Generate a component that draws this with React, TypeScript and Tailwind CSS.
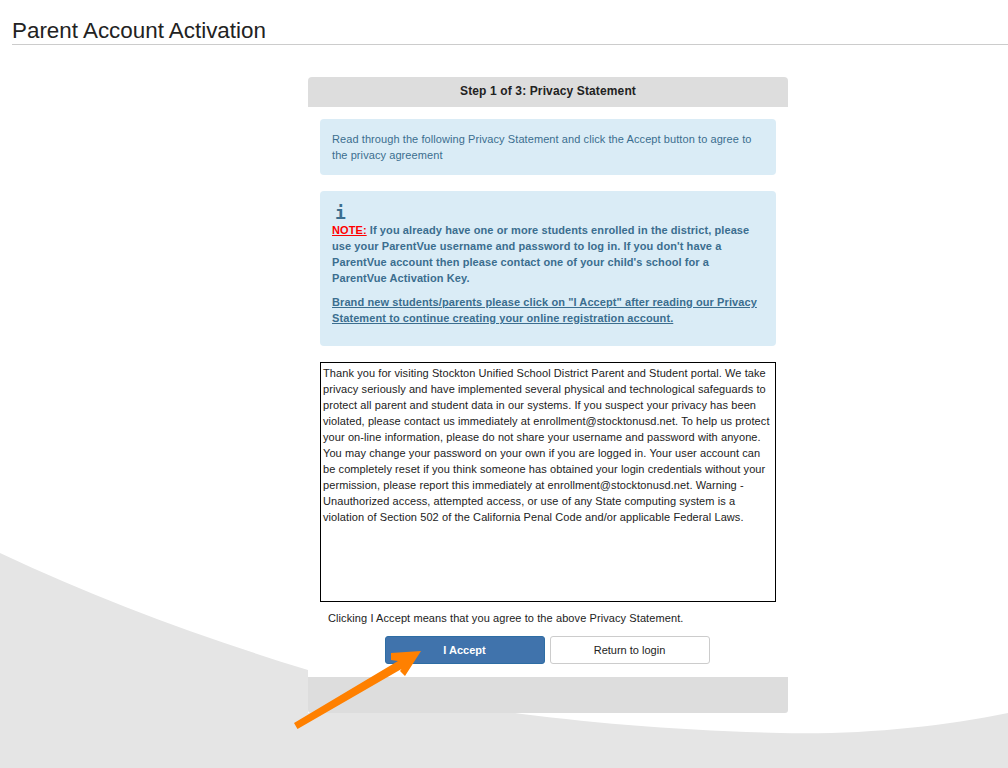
const privacyLines = [
  "Thank you for visiting Stockton Unified School District Parent and Student portal. We take",
  "privacy seriously and have implemented several physical and technological safeguards to",
  "protect all parent and student data in our systems. If you suspect your privacy has been",
  "violated, please contact us immediately at enrollment@stocktonusd.net. To help us protect",
  "your on-line information, please do not share your username and password with anyone.",
  "You may change your password on your own if you are logged in. Your user account can",
  "be completely reset if you think someone has obtained your login credentials without your",
  "permission, please report this immediately at enrollment@stocktonusd.net. Warning -",
  "Unauthorized access, attempted access, or use of any State computing system is a",
  "violation of Section 502 of the California Penal Code and/or applicable Federal Laws.",
];

function Swoosh() {
  return (
    <svg className="absolute inset-0" width="1008" height="768" viewBox="0 0 1008 768">
      <path d="M0 553 C100 600 200 637 308 670 C400 700 570 728 780 733 C860 735 940 727 1008 713 L1008 768 L0 768 Z" fill="#e5e5e5" />
    </svg>
  );
}

function Arrow() {
  return (
    <svg className="absolute inset-0 pointer-events-none" width="1008" height="768" viewBox="0 0 1008 768">
      <path d="M294 723 L398 661 L391 660 L391 653 L421 651 L405 676 L400 671 L401.5 669 L297.5 729 Z" fill="#ff8000" />
    </svg>
  );
}

export default function App() {
  return (
    <div className="relative h-[768px] w-[1008px] overflow-hidden bg-white font-['Liberation_Sans',Arial,sans-serif]">
      <Swoosh />
      <div className="relative flex flex-col">
        <div className="pl-3 pt-[17px]">
          <h1 className="border-b border-[#cccccc] text-[22.4px] leading-[27px] text-[#222222]">Parent Account Activation</h1>
        </div>
        <div className="mt-[32px] ml-[308px] flex w-[480px] flex-col bg-white">
          <div className="flex h-[30px] items-center justify-center rounded-t-[4px] bg-[#dddddd] pb-[2px] text-[12px] font-bold tracking-[0.13px] text-[#222222]">
            Step 1 of 3: Privacy Statement
          </div>
          <div className="flex flex-col px-3 pt-3">
            <div className="rounded-[4px] bg-[#daecf6] px-3 py-3 text-[11px] leading-4 tracking-[0.08px] text-[#3b6e8f]">
              Read through the following Privacy Statement and click the Accept button to agree to the privacy agreement
            </div>
            <div className="mt-4 rounded-[4px] bg-[#daecf6] px-3 pt-[13px] pb-5 text-[11px] leading-4 font-bold tracking-[0.09px] text-[#3b6e8f]">
              <div className="h-[18px] pl-[3px] font-['DejaVu_Sans_Mono',monospace] text-[18px] leading-[18px] tracking-normal">i</div>
              <p>
                <span className="text-[#ff0000] underline">NOTE:</span> If you already have one or more students enrolled in the district, please use your ParentVue username and password to log in. If you don't have a ParentVue account then please contact one of your child's school for a<br />ParentVue Activation Key.
              </p>
              <p className="mt-2 underline">
                Brand new students/parents please click on "I Accept" after reading our Privacy Statement to continue creating your online registration account.
              </p>
            </div>
            <div className="mt-4 h-[240px] border border-black px-[2px] py-[2px] text-[11px] leading-4 tracking-[0.085px] whitespace-nowrap text-[#222222]">
              {privacyLines.map((line) => (
                <div key={line}>{line}</div>
              ))}
            </div>
            <p className="mt-2 pl-2 text-[11px] leading-4 tracking-[0.09px] text-[#222222]">Clicking I Accept means that you agree to the above Privacy Statement.</p>
            <div className="mt-[10px] flex justify-center gap-[5px] pr-[2px]">
              <button className="h-7 w-40 rounded-[3px] border border-[#2e6da4] bg-[#4073ac] text-[11px] font-bold text-white">I Accept</button>
              <button className="h-7 w-40 rounded-[3px] border border-[#cccccc] bg-white text-[11px] text-[#222222]">Return to login</button>
            </div>
          </div>
          <div className="mt-[13px] h-9 rounded-b-[3px] bg-[#dddddd]" />
        </div>
      </div>
      <Arrow />
    </div>
  );
}
